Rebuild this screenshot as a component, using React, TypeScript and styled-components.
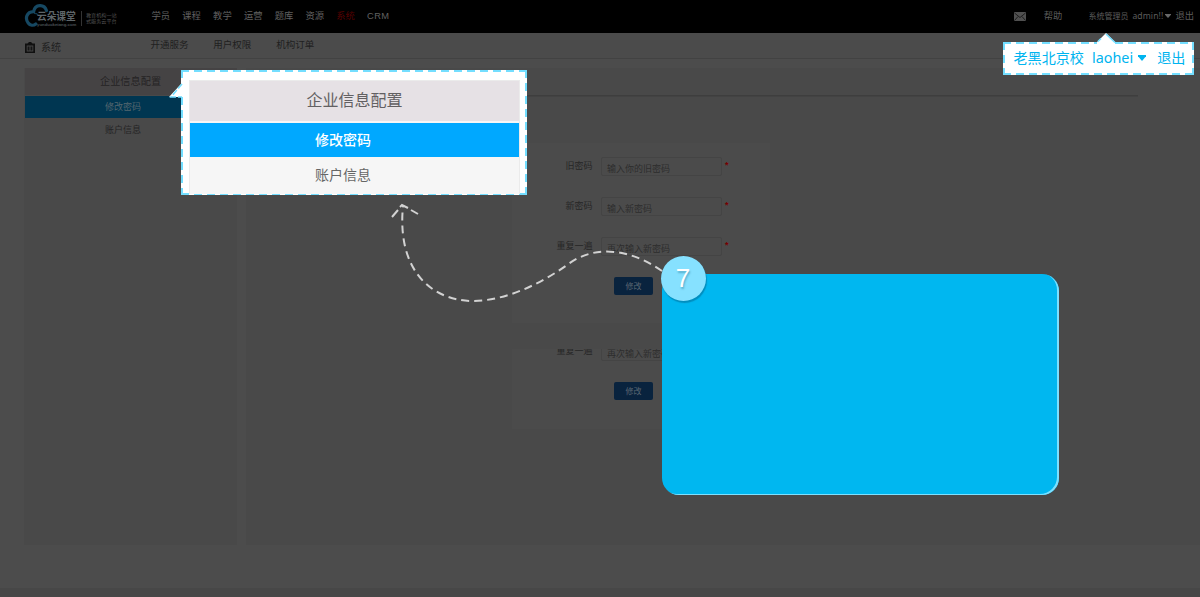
import React from 'react';
import styled, { createGlobalStyle } from 'styled-components';

const GlobalStyle = createGlobalStyle`
  * { box-sizing: border-box; }
  body { margin: 0; background: #4c4c4c; font-family: 'Noto Sans', 'Noto Sans CJK SC', sans-serif; }
`;

const Page = styled.div`
  position: relative;
  width: 1200px;
  height: 597px;
  overflow: hidden;
  display: flex;
  flex-direction: column;
  background: #4c4c4c;
  white-space: nowrap;
`;

const TopBar = styled.header`
  flex: none;
  height: 33px;
  display: flex;
  align-items: flex-start;
  padding: 0 6px 0 24px;
  background: #000;
`;

const Brand = styled.div`
  width: 127.5px;
  display: flex;
  align-items: flex-start;
  padding-top: 3px;
`;

const BrandName = styled.div`
  margin: 7px 0 0 -17px;
  width: 44px;
  color: #5f666a;
  font-size: 9.7px;
  line-height: 13px;
  font-weight: 700;
`;

const BrandUrl = styled.div`
  color: #4a5155;
  font: 700 4.3px/5px 'Liberation Sans', sans-serif;
  margin-top: -1px;
`;

const Slogan = styled.div`
  margin: 8px 0 0 0;
  padding-left: 4px;
  border-left: 1px solid #333;
  color: #505050;
  font-size: 5.1px;
  line-height: 6px;
  height: 15px;
  padding-top: 1px;
`;

const Nav = styled.nav`
  display: flex;
  gap: 12.2px;
  padding-top: 9px;
`;

const NavItem = styled.span<{ $active?: boolean }>`
  font-size: 9.3px;
  line-height: 14px;
  color: ${p => (p.$active ? '#500' : '#606060')};
  &:last-child { font-family: 'Liberation Sans', sans-serif; letter-spacing: 0.4px; line-height: 15px; }
`;

const Account = styled.div`
  margin-left: auto;
  display: flex;
  align-items: center;
  padding-top: 9px;
  color: #5c5c5c;
  font-size: 9.3px;
  line-height: 14px;
`;

const Help = styled.span` margin: 0 26px 0 18px; `;
const UserName = styled.span` font-size: 8px; margin-right: 4px; `;
const AdminName = styled.span` font-size: 8.6px; letter-spacing: 0.1px; margin-right: 2px; `;
const LogoutText = styled.span` margin-left: 4px; `;

const SubBar = styled.div`
  flex: none;
  height: 26px;
  display: flex;
  padding-left: 25px;
  background: #4b4b4b;
  border-bottom: 1px solid #424242;
  color: #202020;
`;

const Section = styled.div`
  width: 125.5px;
  display: flex;
  align-items: flex-start;
  gap: 6px;
  padding-top: 9px;
  font-size: 10px;
  line-height: 10px;
`;

const SubNav = styled.nav`
  display: flex;
  gap: 24.8px;
  padding-top: 5px;
  font-size: 9.5px;
  line-height: 14px;
`;

const Body = styled.div`
  flex: 1;
  display: flex;
  gap: 9px;
  padding: 9px 0 43px 24px;
`;

const Sidebar = styled.aside`
  width: 213px;
  height: 477px;
  background: #494949;
`;

const SideRow = styled.div<{ $kind?: 'title' | 'active' }>`
  height: ${p => (p.$kind === 'title' ? '27px' : '22px')};
  line-height: ${p => (p.$kind === 'title' ? '26px' : '21px')};
  margin-bottom: 1px;
  margin-left: 1px;
  padding-left: ${p => (p.$kind === 'title' ? '75px' : '80px')};
  font-size: ${p => (p.$kind === 'title' ? '10.2px' : '9px')};
  color: ${p => (p.$kind === 'active' ? '#54666f' : '#252425')};
  background: ${p => (p.$kind === 'title' ? '#454344' : p.$kind === 'active' ? '#003651' : 'transparent')};
`;

const Content = styled.main`
  flex: 1;
  height: 477px;
  background: #494949;
`;

const Divider = styled.div`
  height: 28px;
  width: 892px;
  border-bottom: 1px solid #3e3e3e;
  box-shadow: 0 1px 0 #434343;
`;

const Card = styled.section<{ $clipped?: boolean }>`
  width: 258px;
  height: ${p => (p.$clipped ? '80px' : '180px')};
  margin: ${p => (p.$clipped ? '26px' : '47px')} 0 0 266px;
  padding-top: ${p => (p.$clipped ? '0' : '14px')};
  overflow: hidden;
  background: #4b4b4b;
`;

const Field = styled.div<{ $cut?: boolean }>`
  display: flex;
  align-items: flex-start;
  height: 19px;
  margin-top: ${p => (p.$cut ? '-7px' : '0')};
  margin-bottom: 21px;
`;

const Label = styled.label`
  width: 80.5px;
  text-align: right;
  font-size: 9px;
  line-height: 17px;
  color: #262626;
`;

const Input = styled.div`
  width: 121px;
  height: 19px;
  margin-left: 8.5px;
  padding-left: 5px;
  border: 1px solid #444;
  border-radius: 2px;
  font-size: 9px;
  line-height: 21px;
  color: #2d2d2d;
`;

const Required = styled.span`
  margin-left: 3px;
  color: #700;
  font: 700 9px/17px 'Liberation Sans', sans-serif;
`;

const Submit = styled.div`
  width: 39px;
  height: 18px;
  margin-left: 102px;
  border-radius: 2px;
  background: #09233e;
  color: #596672;
  font-size: 8px;
  line-height: 17px;
  text-align: center;
`;

const Footer = styled.footer`
  flex: none;
  height: 9px;
  background: #474747;
`;

const Callout = styled.div`
  position: absolute;
  left: 168px;
  top: 69px;
  width: 360px;
  height: 127px;
  padding: 11px 8px 2px 21px;
`;

const Frame = styled.svg`
  position: absolute;
  inset: 0;
  width: 100%;
  height: 100%;
`;

const Menu = styled.div`
  position: relative;
  height: 114px;
  border: 1px solid #ebebeb;
  border-bottom: 0;
  background: #f6f6f6;
`;

const MenuTitle = styled.div`
  height: 40px;
  background: #e6e1e5;
  color: #626062;
  font-size: 16px;
  line-height: 39px;
  text-align: center;
`;

const MenuItem = styled.div<{ $active?: boolean }>`
  height: 34px;
  margin-top: ${p => (p.$active ? '2px' : '0')};
  padding-left: 125px;
  background: ${p => (p.$active ? '#00a8ff' : '#f6f6f6')};
  color: ${p => (p.$active ? '#fff' : '#666')};
  font-size: 14px;
  font-weight: ${p => (p.$active ? 500 : 400)};
  line-height: ${p => (p.$active ? '34px' : '36px')};
`;

const UserCallout = styled.div`
  position: absolute;
  left: 1002px;
  top: 33px;
  width: 194px;
  height: 43px;
  padding: 15px 8px 0 11.5px;
  color: #00b4ef;
  font-size: 14.1px;
  line-height: 20px;
`;

const UserLine = styled.div`
  position: relative;
  display: flex;
  align-items: center;
`;

const Laohei = styled.span` margin: 0 5px 0 8px; font-size: 14.4px; `;
const Exit = styled.span` margin-left: 11px; `;

const Trail = styled.svg`
  position: absolute;
  left: 380px;
  top: 195px;
`;

const Note = styled.div`
  position: absolute;
  left: 662px;
  top: 274px;
  width: 397px;
  height: 221px;
  border-radius: 17px;
  background: #00b7f0;
  box-shadow: inset -2px -1px 0 #7ce0ff;
`;

const Step = styled.div`
  position: absolute;
  left: 661px;
  top: 256px;
  width: 45px;
  height: 45px;
  border-radius: 50%;
  background: #86e1ff;
  box-shadow: 1px 2px 1px rgba(0, 120, 165, 0.65);
  color: #fff;
  font: 26px/45px 'Liberation Sans', sans-serif;
  text-align: center;
  padding-right: 1px;
  text-shadow: 1px 2px 2px rgba(0, 80, 110, 0.35);
`;

const CloudLogo = () => (
  <svg width="30" height="26" viewBox="0 0 30 26" fill="none" stroke="#164862" strokeLinecap="round">
    <path d="M22.5 7.6C20.5.8 11 .8 9.6 8.6 2.5 8.8.8 15.5 4.2 20c1.8 2.6 5.3 3 7.6 1" strokeWidth="3.2" />
    <path d="M10.5 10.4c1.6 0 2.6.5 3.3 1.2" stroke="#113a50" strokeWidth="1.2" />
  </svg>
);

const Caret = ({ w, h, color }: { w: number; h: number; color: string }) => (
  <svg width={w} height={h} viewBox="0 0 10 6" preserveAspectRatio="none">
    <path d="M0 0h10v1.2L5 6 0 1.2z" fill={color} />
  </svg>
);

const nav = ['学员', '课程', '教学', '运营', '题库', '资源', '系统', 'CRM'];
const fields = [['旧密码', '输入你的旧密码'], ['新密码', '输入新密码'], ['重复一遍', '再次输入新密码']];

export default function App() {
  return (
    <>
      <GlobalStyle />
      <Page>
        <TopBar>
          <Brand>
            <CloudLogo />
            <BrandName>云朵课堂<BrandUrl>yunduoketang.com</BrandUrl></BrandName>
            <Slogan>教育机构一站<br />式服务云平台</Slogan>
          </Brand>
          <Nav>
            {nav.map(n => <NavItem key={n} $active={n === '系统'}>{n}</NavItem>)}
          </Nav>
          <Account>
            <svg width="12" height="9" viewBox="0 0 12 9">
              <rect width="12" height="9" rx=".5" fill="#505050" />
              <path d="M.5 1L6 5.5 11.5 1M.5 8.5l3.5-4M11.5 8.5L8 4.500" fill="none" stroke="#101010" strokeWidth=".8" />
            </svg>
            <Help>帮助</Help>
            <UserName>系统管理员</UserName>
            <AdminName>admin!!</AdminName>
            <Caret w={6} h={4} color="#686868" />
            <LogoutText>退出</LogoutText>
          </Account>
        </TopBar>
        <SubBar>
          <Section>
            <svg width="10" height="11" viewBox="0 0 10 11">
              <path d="M0 1.500h2.500L4 0h2l1.500 1.500H10V11H0z" fill="#101010" />
              <path d="M1.700 3.500h6.600v6H1.700z" fill="#454545" />
              <path d="M2.600 4.500h1.900v4H2.600zM5.500 4.500h1.900v4H5.500z" fill="#151515" />
            </svg>
            系统
          </Section>
          <SubNav>
            <span>开通服务</span><span>用户权限</span><span>机构订单</span>
          </SubNav>
        </SubBar>
        <Body>
          <Sidebar>
            <SideRow $kind="title">企业信息配置</SideRow>
            <SideRow $kind="active">修改密码</SideRow>
            <SideRow>账户信息</SideRow>
          </Sidebar>
          <Content>
            <Divider />
            <Card>
              {fields.map(([label, hint]) => (
                <Field key={label}>
                  <Label>{label}</Label><Input>{hint}</Input><Required>*</Required>
                </Field>
              ))}
              <Submit>修改</Submit>
            </Card>
            <Card $clipped>
              <Field $cut>
                <Label>重复一遍</Label><Input>再次输入新密码</Input>
              </Field>
              <Submit>修改</Submit>
            </Card>
          </Content>
        </Body>
        <Footer />

        <Callout>
          <Frame viewBox="0 0 360 127" fill="none">
            <path d="M13 1h346v125H13V28H1l12-13z" fill="#fff" />
            <path d="M13 2h346M13 125h346M14 28v98M14 1v13M358 1v125" stroke="#74deff" strokeWidth="2" strokeDasharray="8 5" />
            <path d="M14 15L3 28h11" stroke="#74deff" strokeWidth="1.6" strokeDasharray="6 2" />
          </Frame>
          <Menu>
            <MenuTitle>企业信息配置</MenuTitle>
            <MenuItem $active>修改密码</MenuItem>
            <MenuItem>账户信息</MenuItem>
          </Menu>
        </Callout>

        <UserCallout>
          <Frame viewBox="0 0 194 43" fill="none">
            <path d="M1 9h94l9-9 9 9h79v33H1z" fill="#fff" />
            <path d="M1 10h94M113 10h79M1 41h191M2 9v33M191 9v33" stroke="#74deff" strokeWidth="2" strokeDasharray="8 5" />
            <path d="M104 1l9 8.5M96 8.5l3-3" stroke="#74deff" strokeWidth="1.6" />
          </Frame>
          <UserLine>
            <span>老黑北京校</span><Laohei>laohei</Laohei>
            <Caret w={8} h={6} color="#00b4ef" />
            <Exit>退出</Exit>
          </UserLine>
        </UserCallout>

        <Trail width="290" height="115" viewBox="380 195 290 115" fill="none" stroke="#d2d2d2" strokeWidth="2">
          <path d="M662 271C632 250 596 243 567 265C536 287 502 301 472 301C428 300 397 267 403 206" strokeDasharray="8 5" />
          <path d="M392 217l6-7M400 207l2-2 6 3M411 210l7 4" />
        </Trail>
        <Note />
        <Step>7</Step>
      </Page>
    </>
  );
}
